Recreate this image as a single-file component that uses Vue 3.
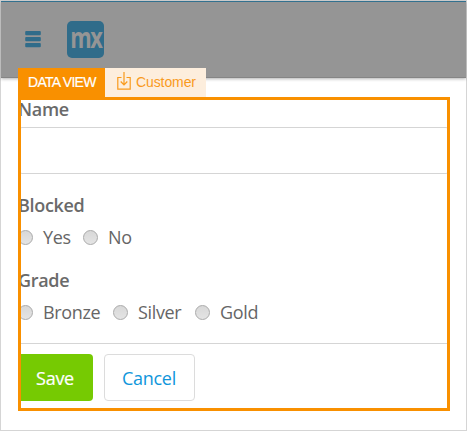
<script setup>
const groups = [
  { label: 'Blocked', kind: 'blocked', options: ['Yes', 'No'] },
  { label: 'Grade', kind: 'grade', options: ['Bronze', 'Silver', 'Gold'] },
]
</script>

<template>
  <div class="page">
    <header class="topbar">
      <svg class="menu" width="16" height="17" viewBox="0 0 16 17">
        <rect x="0.2" y="0" width="15.6" height="4.2" rx="1" />
        <rect x="0.2" y="6" width="15.6" height="4.2" rx="1" />
        <rect x="0.2" y="12" width="15.6" height="4.2" rx="1" />
      </svg>
      <div class="logo"><span>mx</span></div>
    </header>
    <div class="tabs">
      <div class="tab active"><span>DATA VIEW</span></div>
      <div class="tab entity">
        <svg width="14" height="18" viewBox="0 0 14 18" fill="none" stroke="#f99a1c" stroke-width="1.2">
          <path d="M4.5 5.5H.8V17.2H13.2V5.5H9.5M7 0V13M3.7 9.5L7 13L10.3 9.5" />
        </svg>
        <span>Customer</span>
      </div>
    </div>
    <main class="view">
      <div class="form">
        <div class="label">Name</div>
        <div class="input"></div>
        <div v-for="g in groups" :key="g.label" class="group">
          <div class="label">{{ g.label }}</div>
          <div class="options" :class="g.kind">
            <label v-for="o in g.options" :key="o" class="option">
              <i class="radio"></i><span>{{ o }}</span>
            </label>
          </div>
        </div>
        <div class="actions">
          <button class="btn save">Save</button>
          <button class="btn cancel">Cancel</button>
        </div>
      </div>
    </main>
  </div>
</template>

<style>
body { margin: 0; background: #fff; }
</style>

<style scoped>
.page {
  box-sizing: border-box;
  width: 467px;
  height: 431px;
  border: 1px solid #d5d5d5;
  background: #fff;
  font-family: "Open Sans", "Noto Sans", sans-serif;
  color: #666;
}
.topbar {
  box-sizing: border-box;
  height: 77px;
  display: flex;
  align-items: center;
  padding-left: 24px;
  background: #959595;
  border-top: 1px solid #33718f;
  border-bottom: 1px solid #858585;
  box-shadow: 0 1px 3px rgba(0, 0, 0, 0.3);
}
.menu { fill: #306c8a; }
.logo {
  width: 37px;
  height: 37px;
  margin-left: 26px;
  border-radius: 5px;
  background: #306c8a;
  display: flex;
  justify-content: center;
  color: #959595;
  font-size: 28px;
  font-weight: 700;
  line-height: 32px;
}
.logo span { letter-spacing: -2px; transform: scaleX(0.78); }
.tabs {
  position: relative;
  display: flex;
  height: 29px;
  margin: -10px 0 0 17px;
  font: 14px/29px "Liberation Sans", Arial, sans-serif;
}
.tab { display: flex; align-items: center; box-sizing: border-box; white-space: nowrap; }
.active { width: 87px; padding-left: 10px; background: #f99000; color: #fff; letter-spacing: -0.72px; -webkit-text-stroke: 0.2px #fff; }
.entity { width: 101px; padding-left: 12px; gap: 5px; background: #fdeedd; color: #f99a1c; letter-spacing: -0.1px; }
.entity svg { margin-top: -3px; }
.view {
  box-sizing: border-box;
  width: 432px;
  height: 314px;
  margin-left: 17px;
  border: 3px solid #f99000;
  overflow: hidden;
}
.form { margin: 0 -3px; }
.label { height: 20px; font-size: 18px; font-weight: 600; line-height: 18px; letter-spacing: -0.33px; color: #6a6a6a; }
.input {
  box-sizing: border-box;
  height: 47px;
  margin-top: 7px;
  margin-bottom: 22px;
  border: 1px solid #d5d5d5;
  border-radius: 4px;
}
.group + .group { margin-top: 23px; }
.options { display: grid; margin-top: 12px; height: 20px; font-size: 18px; line-height: 20px; letter-spacing: -0.35px; }
.blocked { grid-template-columns: 65px 65px; }
.grade { grid-template-columns: 95px 82px 80px; }
.option { display: flex; align-items: center; gap: 10px; height: 20px; }
.option span { margin-bottom: 2px; }
.radio {
  box-sizing: border-box;
  width: 15px;
  height: 15px;
  margin-bottom: 1px;
  border: 1px solid #aaa;
  border-radius: 50%;
  background: linear-gradient(#d8d8d8, #e4e4e4);
}
.actions {
  display: flex;
  gap: 11px;
  margin-top: 20px;
  padding-top: 10px;
  border-top: 1px solid #d5d5d5;
}
.btn {
  box-sizing: border-box;
  height: 47px;
  padding: 0 1px 0 0;
  border-radius: 4px;
  font: 18px/24px "Open Sans", "Noto Sans", sans-serif;
  letter-spacing: -0.3px;
}
.save { width: 75px; border: 0; background: #76ca02; color: #fff; -webkit-text-stroke: 0.2px #fff; }
.cancel { width: 91px; border: 1px solid #dcdcdc; background: #fff; color: #0f96db; }
</style>
